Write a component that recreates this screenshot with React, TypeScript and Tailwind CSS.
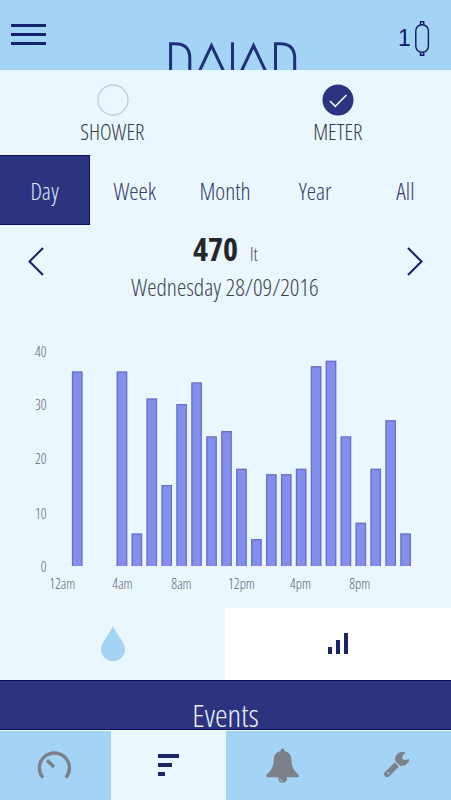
import React from "react";

const usage = [
  0, 36, 0, 0, 36, 6, 31, 15, 30, 34, 24, 25, 18, 5, 17, 17, 18, 37, 38, 24, 8, 18, 27, 6,
];

const periods = ["Day", "Week", "Month", "Year", "All"];

const yTicks = [
  { label: "40", y: 31 },
  { label: "30", y: 84.5 },
  { label: "20", y: 138 },
  { label: "10", y: 193 },
  { label: "0", y: 246.5 },
];

const xTicks = [
  { label: "12am", x: 62.3 },
  { label: "4am", x: 122.5 },
  { label: "8am", x: 181.5 },
  { label: "12pm", x: 241.5 },
  { label: "4pm", x: 300.5 },
  { label: "8pm", x: 359.7 },
];

function Header() {
  return (
    <header className="flex h-[70px] shrink-0 overflow-hidden bg-[#a4d4f5]">
      <div className="flex w-[150px] flex-col gap-[6px] pt-6 pl-[11px]">
        <div className="h-[3px] w-[35px] bg-[#16216e]" />
        <div className="h-[3px] w-[35px] bg-[#16216e]" />
        <div className="h-[3px] w-[35px] bg-[#16216e]" />
      </div>
      <svg className="mt-[40px] h-[30px] w-[160px]" viewBox="150 40 160 30" fill="none" stroke="#1f3079" strokeWidth="3" aria-label="NAIAD">
        <path d="M170.6 72V43.7H175C185 43.7 189.8 49 189.8 58V72" />
        <path d="M199 72L211.5 45.5L224 72" />
        <path d="M232.5 42.3V72" />
        <path d="M241 72L253.5 45.5L266 72" />
        <path d="M275.5 72V43.7H280C290 43.7 294.7 49 294.7 58V72" />
      </svg>
      <div className="ml-auto flex w-[61px] pt-5 pl-[8px] text-[#0d1766]">
        <span className="w-4 pt-[5px] font-['Liberation_Sans'] text-[23px] leading-[26px]">1</span>
        <svg className="h-9 w-4" viewBox="414 20 16 36" fill="none" stroke="#0d1766" strokeWidth="1.4">
          <rect x="415.8" y="24.8" width="12.6" height="27.4" rx="6" />
          <path d="M420.5 24.5V21.7H423.7V24.5M420.5 52.5V55.3H423.7V52.5" />
        </svg>
      </div>
    </header>
  );
}

function Source({ label, checked = false }: { label: string; checked?: boolean }) {
  return (
    <div className="flex w-1/2 flex-col items-center pt-[14px] text-[#333840]">
      <svg className="h-8 w-8" viewBox="0 0 32 32" fill="none">
        {checked ? (
          <>
            <circle cx="16" cy="16" r="15.5" fill="#2c337f" />
            <path d="M8 17L13.3 22.3L24.5 11" stroke="#edf6ff" strokeWidth="1.7" />
          </>
        ) : (
          <circle cx="16" cy="16" r="15" stroke="#c2c7da" strokeWidth="1.3" />
        )}
      </svg>
      <span className="pr-px text-[22px] leading-[30px]">{label}</span>
    </div>
  );
}

function Chart() {
  return (
    <svg className="block h-[303px] w-full" viewBox="0 0 451 303">
      <g transform="translate(0 15)" fontSize="14.2" fill="#606772">
        {yTicks.map((t) => (
          <text key={t.label} x="46.5" y={t.y + 5.7} textAnchor="end">{t.label}</text>
        ))}
        {usage.map((v, i) =>
          v > 0 ? (
            <g key={i}>
              <rect x={57 + i * 14.93} y={246 - v * 5.4} width="10.5" height={v * 5.4} fill="#838eed" />
              <path d={`M${57.6 + i * 14.93} 246V${246.6 - v * 5.4}h9.3V246`} fill="none" stroke="#6970c5" strokeWidth="1.2" />
            </g>
          ) : null
        )}
        {xTicks.map((t) => (
          <text key={t.label} x={t.x} y="269" textAnchor="middle">{t.label}</text>
        ))}
      </g>
    </svg>
  );
}

function BottomNav() {
  return (
    <nav className="flex h-[70px] shrink-0 border-t border-[#edf8ff] bg-[#a4d4f5]">
      <div className="flex w-[111px] justify-center">
        <svg className="h-[69px] w-[111px]" viewBox="0 731 111 69" fill="none" stroke="#7d8089" strokeWidth="3.4">
          <path d="M43 777.7A15 15 0 1 1 65.8 777.7" />
          <path d="M47 760.3L54 767" />
        </svg>
      </div>
      <div className="w-[115px] bg-[#ebf7ff] pt-[23px] pl-[47px]">
        <div className="flex flex-col gap-[5px]">
          <div className="h-[4px] w-[21px] bg-[#1c2466]" />
          <div className="h-[4px] w-[14px] bg-[#1c2466]" />
          <div className="h-[4px] w-[7px] bg-[#1c2466]" />
        </div>
      </div>
      <svg className="h-[69px] w-[113px]" viewBox="226 731 113 69">
        <circle cx="282.6" cy="778.3" r="4.5" fill="#7d8089" />
        <path d="M280.8 751A1.9 1.9 0 1 1 284.4 751C289 751.8 291.2 755 291.5 760C291.8 766 293 770 298.3 774.3C299.4 775.4 298.8 777.3 297.2 777.3H267.9C266.3 777.3 265.7 775.4 266.8 774.3C272.2 770 273.4 766 273.7 760C274 755 276.2 751.8 280.8 751Z" fill="#7d8089" />
        <path d="M279.7 778.5A3.2 3.2 0 0 0 282.6 781" fill="none" stroke="#a4d4f5" strokeWidth="0.8" />
      </svg>
      <svg className="h-[69px] w-[112px]" viewBox="339 731 112 69" fill="#7d8089">
        <path d="M405.6 752.9A7 7 0 0 0 395.6 761.6L399.6 765.2A7 7 0 0 0 409.2 758.6C406.8 760.4 403.8 760.5 402.6 759C401.6 757.4 402.6 754.6 405.6 752.9Z" />
        <path d="M394.7 762.4L399 766.4L389.3 776.2A3 3 0 0 1 385.1 771.9Z" />
        <circle cx="388.5" cy="773" r="1.1" fill="#a4d4f5" />
      </svg>
    </nav>
  );
}

export default function App() {
  return (
    <main className="flex h-[800px] w-[451px] flex-col overflow-hidden bg-[#ebf7fe] font-['Open_Sans',sans-serif] font-light font-stretch-condensed">
      <Header />
      <section className="flex h-[85px] shrink-0">
        <Source label="SHOWER" />
        <Source label="METER" checked />
      </section>
      <section className="grid h-[70px] shrink-0 grid-cols-5">
        {periods.map((p) => (
          <div
            key={p}
            className={
              p === "Day"
                ? "flex items-center justify-center border border-l-0 border-[#0b1060] bg-[#2c337f] pt-1 text-[23.5px] text-[#dce8fb]"
                : "flex items-center justify-center pt-1 pr-px text-[23.5px] text-[#353b6c]"
            }
          >
            {p}
          </div>
        ))}
      </section>
      <section className="flex h-[80px] shrink-0 items-start justify-between px-[27px] pt-[21px]">
        <svg className="h-[30px] w-[18px]" viewBox="0 0 18 30" fill="none" stroke="#171e65" strokeWidth="2">
          <path d="M16 2L2.5 15.5L16 29" />
        </svg>
        <div className="-mt-[21px] flex flex-col items-center">
          <div className="flex h-[46px] items-baseline gap-3 text-[#24282b]">
            <span className="text-[32px] leading-[47px] font-bold">470</span>
            <span className="text-[19px] text-[#4c5158]">lt</span>
          </div>
          <div className="pr-px text-[23.6px] leading-[32px] text-[#3e444d]">Wednesday 28/09/2016</div>
        </div>
        <svg className="h-[30px] w-[18px]" viewBox="0 0 18 30" fill="none" stroke="#171e65" strokeWidth="2">
          <path d="M2 2L15.5 15.5L2 29" />
        </svg>
      </section>
      <Chart />
      <section className="flex h-[72px] shrink-0">
        <div className="flex w-[225px] justify-center pt-[18px]">
          <svg className="h-9 w-6" viewBox="0 0 24 36" fill="#a4d4f5">
            <path d="M12 0C14 6.5 24 16 24 23.3A12 12 0 0 1 0 23.3C0 16 10 6.5 12 0Z" />
          </svg>
        </div>
        <div className="flex w-[226px] items-end justify-center gap-1 bg-white pb-[26px]">
          <div className="h-[7px] w-[4px] bg-[#1c2466]" />
          <div className="h-[14px] w-[4px] bg-[#1c2466]" />
          <div className="h-[21px] w-[4px] bg-[#1c2466]" />
        </div>
      </section>
      <section className="h-[50px] shrink-0 border-y border-[#0b1060] bg-[#2c337f] pt-[12px] text-center text-[32px] leading-[43px] text-[#e8efff]">
        Events
      </section>
      <BottomNav />
    </main>
  );
}
